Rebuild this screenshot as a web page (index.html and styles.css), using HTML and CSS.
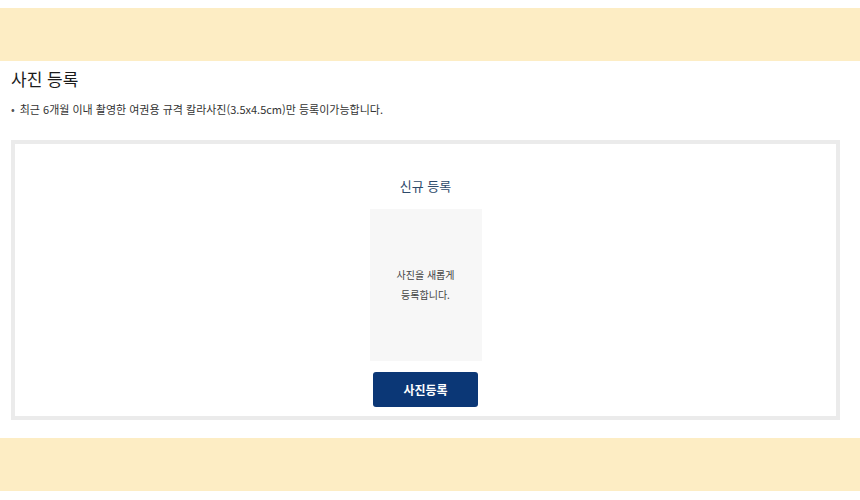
FILE: index.html
```html
<!DOCTYPE html>
<html lang="ko">
<head>
  <meta charset="UTF-8" />
  <meta name="viewport" content="width=device-width, initial-scale=1.0"/>
  <title>사진 등록</title>
  <link rel="stylesheet" href="styles.css">
</head>
<body>

<!-- Top banner -->
<div class="band"></div>

<div class="content">
  <h2 class="title">사진 등록</h2>
  <p class="notice">최근 6개월 이내 촬영한 여권용 규격 칼라사진(3.5x4.5cm)만 등록이가능합니다.</p>

  <div class="photo-box">
    <div class="photo-head">신규 등록</div>
    <div class="photo-frame">
      사진을 새롭게<br>등록합니다.
    </div>
    <button class="photo-btn">사진등록</button>
  </div>
</div>

<!-- Bottom banner -->
<div class="band band-bottom"></div>

</body>
</html>
```

FILE: styles.css
```css
* { box-sizing: border-box; margin: 0; padding: 0; }
body {
  font-family: "Noto Sans CJK KR", "Noto Sans", sans-serif;
  background: #fff;
  color: #222;
  padding-top: 8px;
}

.band {
  height: 53px;
  background: #fdedc4;
}

.band-bottom { margin-top: 18px; }

.content { padding: 0 20px 0 11px; }

.title {
  font-size: 17px;
  font-weight: 400;
  line-height: 24px;
  margin-top: 6px;
  color: #1a1a1a;
}

.notice {
  font-size: 11px;
  line-height: 16px;
  margin-top: 10px;
  color: #333;
}
.notice::before {
  content: "•";
  margin-right: 5px;
  color: #555;
}

.photo-box {
  margin-top: 23px;
  width: 829px;
  height: 280px;
  border: 4px solid #ebebeb;
  display: flex;
  flex-direction: column;
  align-items: center;
  padding-top: 33px;
}

.photo-head {
  font-size: 13px;
  line-height: 18px;
  color: #2d4a6a;
  font-weight: 400;
}

.photo-frame {
  margin-top: 14px;
  width: 112px;
  height: 152px;
  background: #f7f7f7;
  display: flex;
  align-items: center;
  justify-content: center;
  text-align: center;
  font-size: 10px;
  line-height: 20px;
  color: #444;
}

.photo-btn {
  margin-top: 11px;
  width: 105px;
  height: 35px;
  border: none;
  border-radius: 3px;
  background: #0b3776;
  color: #fff;
  font-family: inherit;
  font-size: 12px;
  font-weight: 700;
  cursor: pointer;
}
```
